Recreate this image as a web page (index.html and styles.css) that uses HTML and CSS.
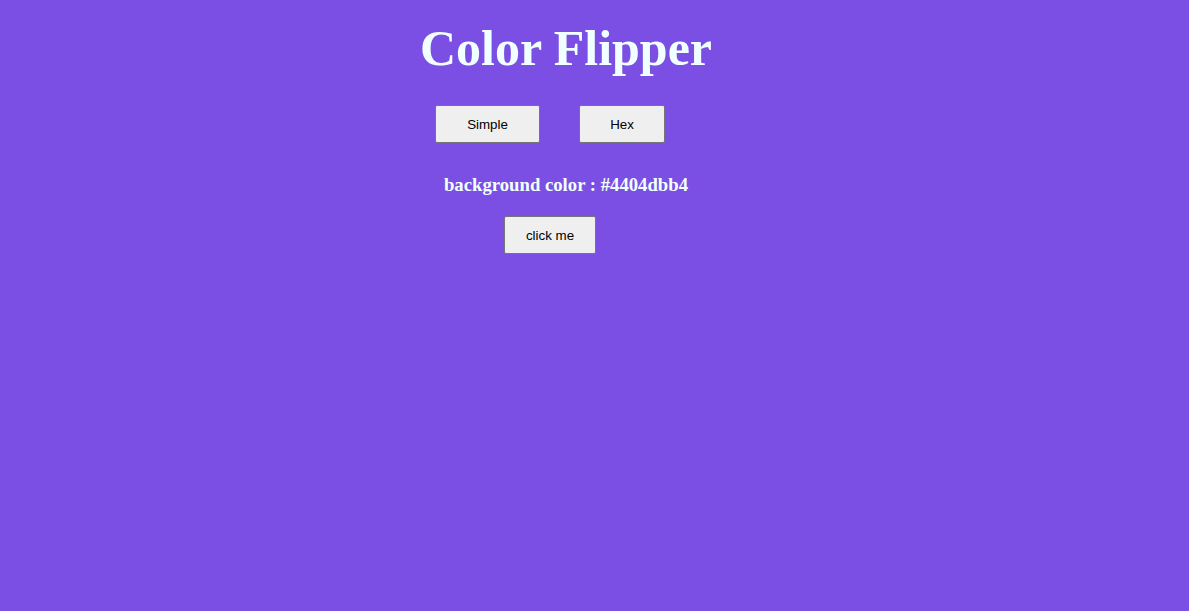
FILE: index.html
```html
<!DOCTYPE html>
<html>
<head>
<meta charset="utf-8">
<link rel="stylesheet" href="styles.css">
</head>
<body>
<main class="page">
  <h1 class="title">Color Flipper</h1>
  <nav class="modes">
    <button class="btn btn-simple">Simple</button>
    <button class="btn btn-hex">Hex</button>
  </nav>
  <h3 class="label">background color : #4404dbb4</h3>
  <div class="action">
    <button class="btn btn-click">click me</button>
  </div>
</main>
</body>
</html>
```
FILE: styles.css
```css
html, body {
  margin: 0;
  padding: 0;
}
body {
  background: #7b4fe3;
  min-height: 611px;
  font-family: "Liberation Serif", "Times New Roman", serif;
}
.page {
  width: 1132px;
  display: flex;
  flex-direction: column;
  align-items: center;
}
.title {
  margin: 14px 0 0;
  font-size: 50px;
  line-height: 68px;
  font-weight: bold;
  color: #f0ffff;
}
.modes {
  display: flex;
  gap: 39px;
  margin: 23px 0 0 -32px;
}
.btn {
  box-sizing: border-box;
  height: 38px;
  background: #efefef;
  border: 1px solid #767676;
  border-radius: 2px;
  font-family: "Liberation Sans", Arial, sans-serif;
  font-size: 13.33px;
  color: #000;
  padding: 0;
}
.btn-simple { width: 105px; }
.btn-hex { width: 86px; }
.btn-click { width: 92px; }
.label {
  margin: 30px 0 0;
  font-size: 18.72px;
  line-height: 24px;
  color: #f0ffff;
  font-weight: bold;
}
.action {
  margin: 19px 0 0 -32px;
}
```
